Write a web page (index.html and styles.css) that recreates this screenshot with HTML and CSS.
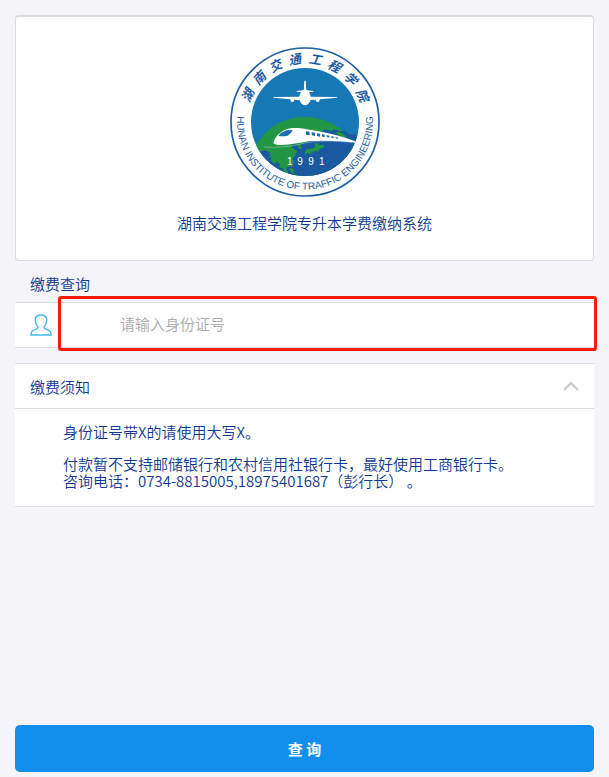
FILE: index.html
```html
<!DOCTYPE html>
<html lang="zh-CN">
<head>
  <meta charset="UTF-8" />
  <meta name="viewport" content="width=device-width, initial-scale=1" />
  <title>湖南交通工程学院专升本学费缴纳系统</title>
  <link rel="stylesheet" href="styles.css">
</head>
<body>
  <header class="card">
    <svg class="logo" viewBox="15 15 450 450" role="img" aria-label="湖南交通工程学院">
      <defs>
        <clipPath id="inner"><circle cx="240" cy="240" r="162" /></clipPath>
        <path id="arcTop" d="M64 240 A176 176 0 0 1 416 240" />
        <path id="arcBottom" d="M50 165 A204 204 0 1 0 430 165" />
      </defs>
      <circle cx="240" cy="240" r="222" fill="#fff" stroke="#1d5ea3" stroke-width="5" />
      <g clip-path="url(#inner)">
        <rect x="70" y="70" width="340" height="340" fill="#1778b6" />
        <circle cx="240" cy="397" r="172" fill="#239645" />
        <!-- mar -->
        <path fill="#18599f" d="M70 326 L108 328 L120 325 L133 331 L136 341 L128 347 L140 345 L138 357 L147 365 L158 360 L165 366 L160 376 L172 378 L180 390 L174 402 L184 407 L190 393 L183 382 L188 374 L201 374 L207 360 L203 348 L210 340 L217 327 L207 321 L199 314 L204 307 L216 309 L224 322 L231 318 L226 307 L240 303 L256 296 L270 286 L276 275 L290 269 L300 262 L318 267 L330 262 L344 268 L360 267 L372 276 L420 280 L420 420 L70 420 Z" />
        <!-- islas -->
        <path fill="#239645" d="M239 330 L246 321 L260 320 L270 314 L269 303 L277 304 L282 309 L296 309 L297 316 L285 320 L279 328 L267 327 L257 335 L246 332 L242 341 Z M330 272 L342 270 L356 276 L364 285 L352 288 L344 282 Z M193 380 L200 378 L207 384 L206 397 L197 391 Z" />
        <path fill="#fff" d="M145 303 C149 286 163 271 181 263 C195 256 221 257 241 261 C285 268 345 279 402 302 C340 297 292 294 250 298 C219 303 183 312 155 308 Q147 307 145 303 Z" />
        <path fill="#1b6fae" d="M160 282 Q169 270 184 265 L203 264 Q199 274 188 281 Q175 284 160 282 Z" />
        <path fill="#1b6fae" d="M243 268 l11 1 v11 l-11 -2 Z M260 271 l10 1 v10 l-10 -2 Z M276 274 l9 1 v9 l-9 -2 Z M291 277 l8 1 v7 l-8 -1 Z M305 279 l8 2 v6 l-8 -2 Z M319 282 l7 2 v5 l-7 -2 Z M332 285 l7 2 v4 l-7 -2 Z" />
        <path fill="none" stroke="#fff" stroke-width="1" d="M116 315 Q180 320 245 302 Q310 291 402 304" />
      </g>
      <!-- avión -->
      <g fill="#fff">
        <path d="M238 116 h4 l2 31 h-8 Z" />
        <path d="M215 147 L240 144 L265 147 L265 149 L240 151 L215 149 Z" />
        <path d="M145 165 L225 164 L255 164 L336 165 L336 167 L260 174 L220 174 L145 167 Z" />
        <ellipse cx="240" cy="167" rx="17" ry="23" />
        <circle cx="202" cy="174" r="6" />
        <circle cx="278" cy="174" r="6" />
      </g>
      <text class="logo-year" x="186 217 250 282" y="370">1991</text>
      <text class="logo-cn" text-anchor="middle"><textPath href="#arcTop" startOffset="50%"><tspan dx="0 19 19 19 19 19 19 19">湖南交通工程学院</tspan></textPath></text>
      <text class="logo-en" text-anchor="middle"><textPath href="#arcBottom" startOffset="50%">HUNAN INSTITUTE OF TRAFFIC ENGINEERING</textPath></text>
    </svg>
    <h1>湖南交通工程学院专升本学费缴纳系统</h1>
  </header>

  <form id="queryForm">
    <label class="form-title" for="idCard">缴费查询</label>
    <div class="input-row">
      <svg class="user-icon" viewBox="0 0 23 24" aria-hidden="true">
        <path d="M8.5 14 C6.500 12 5.500 9.500 5.500 7 C5.500 3.500 7.800 1.500 11.500 1.500 C15.200 1.500 17.500 3.500 17.500 7 C17.500 9.500 16.500 12 14.500 14 C14.500 15.500 15.500 16 17 16.500 C20.500 17.700 22 18.500 22 22.500 H1 C1 18.500 2.500 17.700 6 16.500 C7.500 16 8.500 15.500 8.500 14 Z" />
      </svg>
      <input type="text" id="idCard" name="idCard" placeholder="请输入身份证号" />
      <span class="highlight"></span>
    </div>
  </form>

  <details class="notice" open>
    <summary>
      缴费须知
      <svg class="arrow" viewBox="0 0 16 10" aria-hidden="true"><path d="M1 9 L8 2 L15 9" /></svg>
    </summary>
    <div class="notice-body">
      <p>身份证号带X的请使用大写X。</p>
      <p>付款暂不支持邮储银行和农村信用社银行卡，最好使用工商银行卡。<br>咨询电话：0734-8815005,18975401687（彭行长） 。</p>
    </div>
  </details>

  <button type="submit" form="queryForm" class="btn">查 询</button>
</body>
</html>
```

FILE: styles.css
```css
* { box-sizing: border-box; }
body {
  display: flex;
  flex-direction: column;
  min-height: 100vh;
  margin: 0;
  padding: 15px 15px 5px;
  background-color: #f4f4f9;
  color: #0f3a90;
  font-family: "Noto Sans CJK SC", sans-serif;
  font-size: 15px;
  font-weight: 350;
  line-height: 17px;
}
.card {
  display: flex;
  flex-direction: column;
  align-items: center;
  gap: 17px;
  padding: 30px 15px 29px;
  background: white;
  border: 1px solid #dcdde0;
  border-top-width: 2px;
  border-radius: 4px;
}
.logo { width: 150px; height: 150px; }
.logo-year { font: 30px "Liberation Sans", sans-serif; fill: white; }
.logo-cn { font: italic bold 38px "Noto Sans CJK SC", sans-serif; fill: #1d5ea3; }
.logo-en { font: 30px "Liberation Sans", sans-serif; fill: #1d5ea3; }
h1 { margin: 0; font-size: 15px; font-weight: inherit; }
.form-title { display: block; padding: 14px 15px 10px; }
.input-row {
  position: relative;
  display: flex;
  align-items: center;
  height: 46px;
  padding-left: 15px;
  background: white;
  border-top: 1px solid #dcdde0;
  border-bottom: 1px solid #dcdde0;
}
.user-icon { width: 22px; height: 24px; fill: none; stroke: #45b8ea; stroke-width: 1.5; }
.input-row input {
  flex: 1;
  min-width: 0;
  height: 44px;
  margin-left: 20px;
  padding: 0 15px 3px 48px;
  border: none;
  outline: none;
  background: transparent;
  color: #0f3a90;
  font: inherit;
}
.input-row input::placeholder { color: #aaa; }
/* recuadro rojo sobre el campo */
.highlight {
  position: absolute;
  top: -7px;
  right: -3px;
  bottom: -4px;
  left: 43px;
  border: 3px solid #ff1a10;
  border-radius: 3px;
  pointer-events: none;
}
.notice {
  margin-top: 15px;
  background: white;
  border-top: 1px solid #dcdde0;
  border-bottom: 1px solid #dcdde0;
}
.notice summary {
  display: flex;
  align-items: center;
  justify-content: space-between;
  height: 45px;
  padding: 0 15px;
  border-bottom: 1px solid #dcdde0;
  cursor: pointer;
  list-style: none;
}
.notice summary::-webkit-details-marker { display: none; }
.arrow { width: 16px; height: 10px; fill: none; stroke: #c8c8cd; stroke-width: 2; }
.notice-body { padding: 14px 15px 17px 48px; }
.notice-body p { margin: 0; }
.notice-body p + p { margin-top: 15px; }
.btn {
  height: 47px;
  margin-top: auto;
  border: none;
  border-radius: 5px;
  background-color: #128eeb;
  color: white;
  font: inherit;
  font-weight: bold;
  cursor: pointer;
}
.btn:hover { background-color: #0f7fd4; }
```
